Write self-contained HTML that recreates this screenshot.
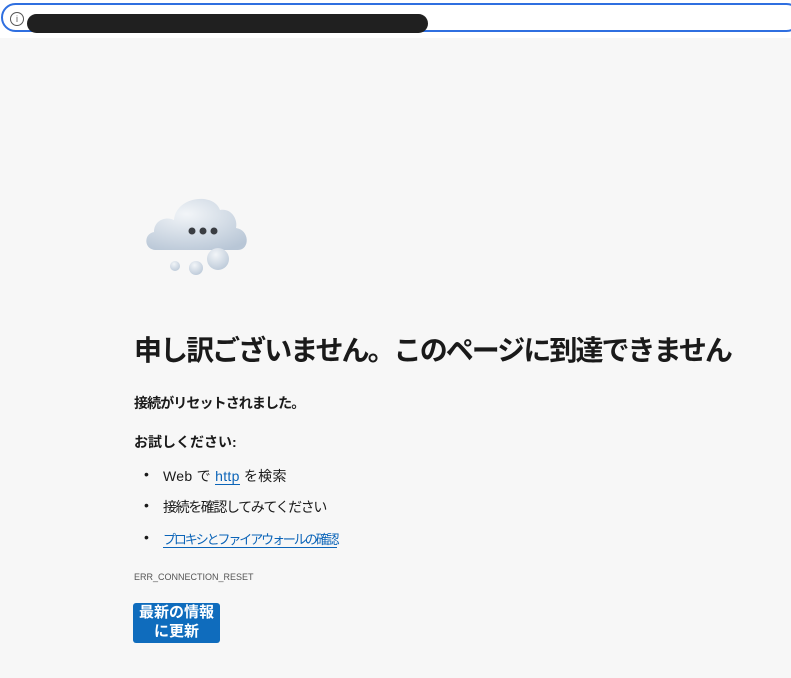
<!DOCTYPE html>
<html><head><meta charset="utf-8"><style>
body{margin:0;width:791px;height:678px;background:#f7f7f7;font-family:"Liberation Sans","Noto Sans CJK JP",sans-serif;color:#1a1a1a;overflow:hidden;position:relative}
.bar{position:absolute;left:0;top:0;width:800px;height:38px;background:#fff}
.url{position:absolute;left:1px;top:3px;width:800px;height:29px;border:2px solid #2f6fe0;border-radius:17px;box-sizing:border-box;background:#fff}
.info{position:absolute;left:10px;top:12px;width:12px;height:12px;border:1px solid #555;border-radius:50%;font-size:9px;line-height:12px;text-align:center;color:#555}
.red{position:absolute;left:27px;top:14px;width:401px;height:19px;background:#202020;border-radius:10px}
.a{position:absolute;white-space:nowrap}
a{color:#0b64b8;text-decoration:none;border-bottom:1px solid #0b64b8}
</style></head><body>
<div class="bar"></div><div class="url"></div>
<div class="info">i</div><div class="red"></div>
<svg class="a" style="left:140px;top:192px" width="115" height="88">
<defs><radialGradient id="g" cx="40%" cy="30%" r="80%"><stop offset="0" stop-color="#f2f5f8"/><stop offset="1" stop-color="#b8c6d6"/></radialGradient></defs>
<path d="M16 58 C4 58 3 42 14 40 C14 28 26 24 34 28 C36 4 74 0 80 18 C92 16 98 28 96 36 C110 38 110 58 98 58 Z" fill="url(#g)"/>
<circle cx="78" cy="67" r="11" fill="url(#g)"/>
<circle cx="56" cy="76" r="7" fill="url(#g)"/>
<circle cx="35" cy="74" r="5" fill="url(#g)"/>
<circle cx="52" cy="39" r="3.5" fill="#3a3d42"/><circle cx="63" cy="39" r="3.5" fill="#3a3d42"/><circle cx="74" cy="39" r="3.5" fill="#3a3d42"/>
</svg>
<div class="a" style="left:134px;top:329px;font-size:28px;letter-spacing:-1.95px;font-weight:bold">申し訳ございません。このページに到達できません</div>
<div class="a" style="left:134px;top:393px;font-size:14px;letter-spacing:-0.9px;font-weight:bold">接続がリセットされました。</div>
<div class="a" style="left:134px;top:432px;font-size:14px;font-weight:bold">お試しください:</div>
<div class="a" style="left:144px;top:466px;font-size:14px">•</div>
<div class="a" style="left:163px;top:466px;font-size:14px;letter-spacing:0.3px">Web で <a>http</a> を検索</div>
<div class="a" style="left:144px;top:497px;font-size:14px">•</div>
<div class="a" style="left:163px;top:497px;font-size:14px;letter-spacing:-1.4px">接続を確認してみてください</div>
<div class="a" style="left:144px;top:529px;font-size:14px">•</div>
<div class="a" style="left:163px;top:529px;font-size:13px;letter-spacing:-2.1px"><a>プロキシとファイアウォールの確認</a></div>
<div class="a" style="left:134px;top:572px;font-size:9px;color:#555">ERR_CONNECTION_RESET</div>
<div class="a" style="left:133px;top:603px;width:87px;height:40px;background:#0f6cbd;border-radius:3px;color:#fff;font-size:15px;font-weight:bold;text-align:center;line-height:19px;white-space:normal">最新の情報<br>に更新</div>
</body></html>
